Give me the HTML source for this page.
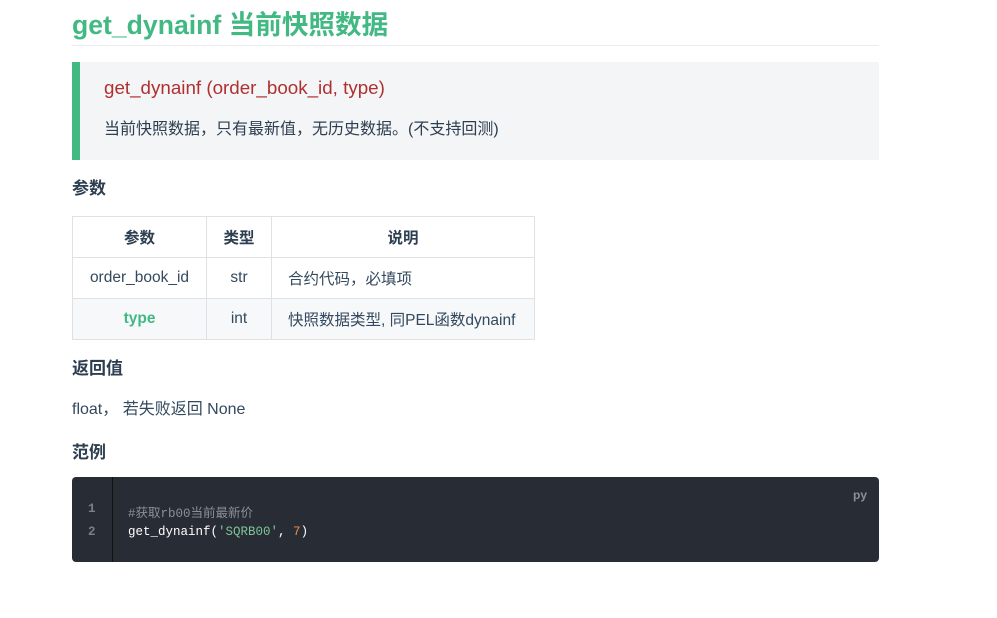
<!DOCTYPE html>
<html><head><meta charset="utf-8"><style>
body{margin:0;background:#fff;font-family:"Liberation Sans","Noto Sans CJK SC",sans-serif;color:#34495e;}
.wrap{position:absolute;left:72px;width:807px;top:0;}
h1{margin:0;position:absolute;top:6px;left:0;font-size:26.6px;color:#42b983;font-weight:bold;line-height:38px;white-space:nowrap;}
.hr{position:absolute;top:45px;left:0;width:807px;height:1px;background:#eaecef;}
.bq{position:absolute;top:62px;left:0;width:807px;height:98px;background:#f3f5f7;border-left:8px solid #42b983;box-sizing:border-box;}
.bq .sig{position:absolute;left:24px;top:14px;font-size:18.8px;color:#b03030;line-height:24px;}
.bq .d{position:absolute;left:24px;top:58px;font-size:16px;color:#2c3e50;line-height:20px;}
h3{position:absolute;margin:0;font-size:17px;font-weight:bold;color:#2c3e50;left:0;line-height:22px;}
table{position:absolute;top:216px;left:0;border-collapse:collapse;font-size:15.5px;color:#34495e;table-layout:fixed;width:462px;}
td,th{border:1px solid #dfe2e5;height:41px;padding:0 16px;text-align:center;white-space:nowrap;box-sizing:border-box;}
th{font-weight:bold;color:#2c3e50}
tr.alt td{background:#f6f8fa}
.p{position:absolute;top:400px;left:0;font-size:16px;line-height:20px;}
.code{position:absolute;top:477px;left:0;width:807px;height:85px;background:#282c34;border-radius:4px;font-family:"Liberation Mono","Noto Sans CJK SC",monospace;font-size:12.5px;}
.gut{position:absolute;left:0;top:0;width:40px;height:85px;border-right:1px solid #111;}
.ln{position:absolute;left:16px;color:#7a7f88;font-weight:bold;}
.cl{position:absolute;left:56px;color:#fff;}
.py{position:absolute;right:12px;top:11px;color:#8b8f96;font-size:12px;font-weight:bold;font-family:"Liberation Sans",sans-serif}
</style></head><body><div class="wrap">
<h1>get_dynainf 当前快照数据</h1>
<div class="hr"></div>
<div class="bq"><div class="sig">get_dynainf (order_book_id, type)</div><div class="d">当前快照数据，只有最新值，无历史数据。(不支持回测)</div></div>
<h3 style="top:178px">参数</h3>
<table>
<colgroup><col style="width:134px"><col style="width:65px"><col style="width:263px"></colgroup>
<tr><th>参数</th><th>类型</th><th>说明</th></tr>
<tr><td style="padding:0">order_book_id</td><td style="padding:0">str</td><td style="text-align:left">合约代码，必填项</td></tr>
<tr class="alt"><td style="color:#42b983;font-weight:bold">type</td><td style="padding:0">int</td><td style="text-align:left">快照数据类型, 同PEL函数dynainf</td></tr>
</table>
<h3 style="top:358px">返回值</h3>
<div class="p">float， 若失败返回 None</div>
<h3 style="top:442px">范例</h3>
<div class="code"><div class="gut"></div><div class="py">py</div>
<div class="ln" style="top:25px">1</div><div class="ln" style="top:48px">2</div>
<div class="cl" style="top:25px;color:#8b9098">#获取rb00当前最新价</div>
<div class="cl" style="top:48px">get_dynainf(<span style="color:#7ec699">'SQRB00'</span>, <span style="color:#f08d49">7</span>)</div>
</div>
</div></body></html>
